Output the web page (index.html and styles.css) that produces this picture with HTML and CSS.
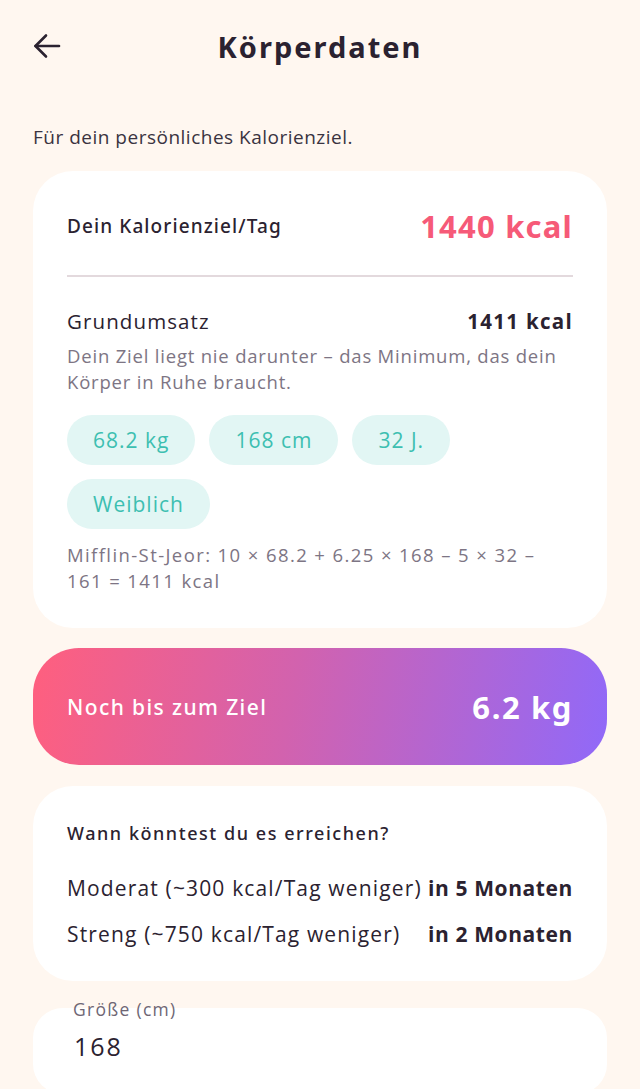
FILE: index.html
```html
<!DOCTYPE html>
<html lang="de">
<head>
<meta charset="utf-8">
<meta name="viewport" content="width=device-width, initial-scale=1">
<title>Körperdaten</title>
<link rel="stylesheet" href="styles.css">
</head>
<body>
<div class="page">
  <header class="topbar">
    <button class="back" aria-label="Zurück">
      <svg width="28" height="26" viewBox="0 0 28 26" fill="none" stroke="#2b2230" stroke-width="2.6" stroke-linecap="round" stroke-linejoin="round">
        <path d="M26 13H2.5"/>
        <path d="M13 2.5L2.5 13L13 23.5"/>
      </svg>
    </button>
    <h1 class="title">Körperdaten</h1>
    <span class="spacer"></span>
  </header>

  <p class="subtitle">Für dein persönliches Kalorienziel.</p>

  <section class="card card-main">
    <div class="row goal-row">
      <span class="goal-label">Dein Kalorienziel/Tag</span>
      <span class="goal-value">1440 kcal</span>
    </div>
    <hr class="divider">
    <div class="row bmr-row">
      <span class="bmr-label">Grundumsatz</span>
      <span class="bmr-value">1411 kcal</span>
    </div>
    <p class="muted desc">Dein Ziel liegt nie darunter – das Minimum, das dein Körper in Ruhe braucht.</p>
    <div class="chips">
      <span class="chip">68.2 kg</span>
      <span class="chip">168 cm</span>
      <span class="chip">32 J.</span>
      <span class="chip">Weiblich</span>
    </div>
    <p class="muted formula">Mifflin-St-Jeor: 10 × 68.2 + 6.25 × 168 – 5 × 32 – 161 = 1411 kcal</p>
  </section>

  <section class="remaining">
    <span class="remaining-label">Noch bis zum Ziel</span>
    <span class="remaining-value">6.2 kg</span>
  </section>

  <section class="card card-eta">
    <h2 class="eta-title">Wann könntest du es erreichen?</h2>
    <div class="eta-list">
      <div class="row eta-row">
        <span>Moderat (~300 kcal/Tag weniger)</span>
        <strong>in 5 Monaten</strong>
      </div>
      <div class="row eta-row">
        <span>Streng (~750 kcal/Tag weniger)</span>
        <strong>in 2 Monaten</strong>
      </div>
    </div>
  </section>

  <div class="field">
    <label class="field-label" for="height">Größe (cm)</label>
    <div class="field-box">
      <input id="height" class="field-input" type="text" value="168">
    </div>
  </div>
</div>
</body>
</html>
```

FILE: styles.css
```css
* { box-sizing: border-box; }

html, body {
  margin: 0;
  padding: 0;
  background: #fff7f0;
}

body {
  font-family: "Open Sans", "Noto Sans", sans-serif;
  color: #2b2230;
  overflow: hidden;
}

.page {
  padding: 0 33px;
}

.topbar {
  height: 92px;
  display: grid;
  grid-template-columns: 60px 1fr 60px;
  align-items: center;
}

.back {
  background: none;
  border: 0;
  padding: 0;
  width: 28px;
  height: 26px;
  display: flex;
  cursor: pointer;
}

.title {
  margin: 0;
  text-align: center;
  font-family: "Noto Sans", sans-serif;
  font-weight: 700;
  font-size: 29px;
  letter-spacing: 2px;
  color: #2b2230;
}

.subtitle {
  margin: 33px 0 0;
  font-size: 19px;
  line-height: 24px;
  color: #3a3340;
  letter-spacing: 0.5px;
}

.card {
  background: #ffffff;
  border-radius: 40px;
  padding: 0 34px;
}

.card-main {
  margin-top: 22px;
  padding-top: 37px;
  padding-bottom: 34px;
}

.row {
  display: flex;
  justify-content: space-between;
  align-items: center;
}

.goal-row { height: 36px; }

.goal-label {
  font-family: "Noto Sans", sans-serif;
  font-weight: 500;
  font-size: 19px;
  letter-spacing: 1.1px;
  color: #2b2230;
}

.goal-value {
  font-family: "Noto Sans", sans-serif;
  font-weight: 700;
  font-size: 31px;
  letter-spacing: 1.2px;
  color: #f65a78;
}

.divider {
  margin: 31px 0 31px;
  border: 0;
  height: 2px;
  background: #e3d9dd;
}

.bmr-row {
  height: 26px;
  font-size: 20.5px;
}

.bmr-label { color: #2b2230; letter-spacing: 1.1px; }
.bmr-value { font-weight: 700; color: #2b2230; letter-spacing: 1.3px; }

.muted {
  color: #7d7584;
  font-size: 18.5px;
  line-height: 26px;
  letter-spacing: 0.8px;
  margin: 0;
}

.desc { margin-top: 9px; }

.chips {
  margin-top: 20px;
  display: flex;
  flex-wrap: wrap;
  gap: 14px;
}

.chip {
  height: 50px;
  padding: 0 26px;
  border-radius: 25px;
  background: #e2f6f4;
  color: #3dbfb1;
  font-size: 21px;
  letter-spacing: 1px;
  display: inline-flex;
  align-items: center;
}

.formula { margin-top: 13px; padding-right: 30px; letter-spacing: 1.4px; }

.remaining {
  margin-top: 20px;
  height: 117px;
  border-radius: 46px;
  padding: 0 34px;
  display: flex;
  justify-content: space-between;
  align-items: center;
  background: linear-gradient(100deg, #ff5f7e 0%, #d262ae 45%, #9069f9 100%);
  color: #ffffff;
}

.remaining-label {
  font-family: "Noto Sans", sans-serif;
  font-weight: 500;
  font-size: 21px;
  letter-spacing: 1.4px;
}

.remaining-value {
  font-family: "Noto Sans", sans-serif;
  font-weight: 700;
  font-size: 31px;
  letter-spacing: 1.6px;
}

.card-eta {
  margin-top: 21px;
  padding-top: 35px;
  padding-bottom: 34px;
}

.eta-title {
  margin: 0;
  font-family: "Noto Sans", sans-serif;
  font-weight: 500;
  font-size: 18px;
  line-height: 24px;
  letter-spacing: 1.55px;
  color: #2b2230;
}

.eta-list {
  margin-top: 30px;
  display: flex;
  flex-direction: column;
  gap: 20px;
}

.eta-row {
  height: 26px;
  font-size: 21px;
  color: #2b2230;
  letter-spacing: 1.15px;
  white-space: nowrap;
}

.eta-row strong { font-weight: 700; letter-spacing: 0.6px; }

.field {
  position: relative;
  margin-top: 27px;
}

.field-label {
  position: absolute;
  left: 40px;
  top: -9px;
  font-size: 17.5px;
  line-height: 20px;
  color: #6e6674;
  letter-spacing: 1.3px;
}

.field-box {
  background: #ffffff;
  border-radius: 30px;
  height: 86px;
  padding: 16px 41px 0;
}

.field-input {
  border: 0;
  outline: none;
  background: transparent;
  font-family: "Open Sans", "Noto Sans", sans-serif;
  font-size: 25px;
  letter-spacing: 2px;
  color: #2b2230;
  padding: 0;
  width: 100%;
  height: 44px;
}
```
